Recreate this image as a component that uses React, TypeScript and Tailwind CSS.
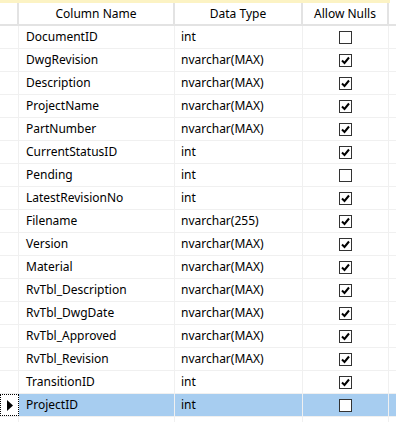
import React from 'react';

type Column = { name: string; type: string; nulls: boolean };

const columns: Column[] = [
  { name: 'DocumentID', type: 'int', nulls: false },
  { name: 'DwgRevision', type: 'nvarchar(MAX)', nulls: true },
  { name: 'Description', type: 'nvarchar(MAX)', nulls: true },
  { name: 'ProjectName', type: 'nvarchar(MAX)', nulls: true },
  { name: 'PartNumber', type: 'nvarchar(MAX)', nulls: true },
  { name: 'CurrentStatusID', type: 'int', nulls: true },
  { name: 'Pending', type: 'int', nulls: false },
  { name: 'LatestRevisionNo', type: 'int', nulls: true },
  { name: 'Filename', type: 'nvarchar(255)', nulls: true },
  { name: 'Version', type: 'nvarchar(MAX)', nulls: true },
  { name: 'Material', type: 'nvarchar(MAX)', nulls: true },
  { name: 'RvTbl_Description', type: 'nvarchar(MAX)', nulls: true },
  { name: 'RvTbl_DwgDate', type: 'nvarchar(MAX)', nulls: true },
  { name: 'RvTbl_Approved', type: 'nvarchar(MAX)', nulls: true },
  { name: 'RvTbl_Revision', type: 'nvarchar(MAX)', nulls: true },
  { name: 'TransitionID', type: 'int', nulls: true },
  { name: 'ProjectID', type: 'int', nulls: false },
];

const CheckBox = ({ checked }: { checked: boolean }) => (
  <div className="w-[13px] h-[13px] border border-[#333333] bg-white flex items-center justify-center">
    {checked && (
      <svg width="9" height="9" viewBox="0 0 9 9">
        <path d="M1 4.5 L3.5 7 L8 1.5" stroke="#000" strokeWidth="2" fill="none" />
      </svg>
    )}
  </div>
);

const Row = ({ col, selected }: { col: Column; selected: boolean }) => (
  <div className={`flex h-[23px] border-b border-[#f0f0f0] ${selected ? 'bg-[#a7cdf0]' : 'bg-white'}`}>
    <div
      className={`w-[19px] shrink-0 flex items-center justify-center bg-white ${
        selected ? 'border border-dotted border-black' : 'border-r border-[#f0f0f0]'
      }`}
    >
      {selected && (
        <svg width="8" height="11" viewBox="0 0 8 11">
          <path d="M1 0 L7 5.5 L1 11 Z" fill="#000" />
        </svg>
      )}
    </div>
    <div className="w-[156px] shrink-0 flex items-center pl-[7px] border-r border-[#f0f0f0]">{col.name}</div>
    <div className="w-[128px] shrink-0 flex items-center pl-[6px] border-r border-[#f0f0f0]">{col.type}</div>
    <div className="w-[86px] shrink-0 flex items-center justify-center border-r border-[#f0f0f0]">
      <CheckBox checked={col.nulls} />
    </div>
  </div>
);

export default function App() {
  return (
    <div
      className="w-[396px] h-[422px] bg-white overflow-hidden text-[12px] text-black"
      style={{ fontFamily: '"Segoe UI", "Noto Sans", sans-serif' }}
    >
      <div className="w-[390px] h-[3px] bg-[#fcf3c4]" />
      <div className="flex h-[23px] border-b-2 border-[#e3e3e3]">
        <div className="w-[19px] shrink-0 border-r-2 border-[#e3e3e3]" />
        <div className="w-[156px] shrink-0 flex items-center justify-center border-r-2 border-[#e3e3e3]">Column Name</div>
        <div className="w-[128px] shrink-0 flex items-center justify-center border-r-2 border-[#e3e3e3]">Data Type</div>
        <div className="w-[86px] shrink-0 flex items-center justify-center border-r-2 border-[#e3e3e3]">Allow Nulls</div>
      </div>
      {columns.map((c, i) => (
        <Row key={c.name} col={c} selected={i === columns.length - 1} />
      ))}
      <div className="flex h-[10px]">
        <div className="w-[19px] shrink-0 border-r border-[#f0f0f0]" />
        <div className="w-[156px] shrink-0 border-r border-[#f0f0f0]" />
        <div className="w-[128px] shrink-0 border-r border-[#f0f0f0]" />
        <div className="w-[86px] shrink-0 border-r border-[#f0f0f0]" />
      </div>
    </div>
  );
}
